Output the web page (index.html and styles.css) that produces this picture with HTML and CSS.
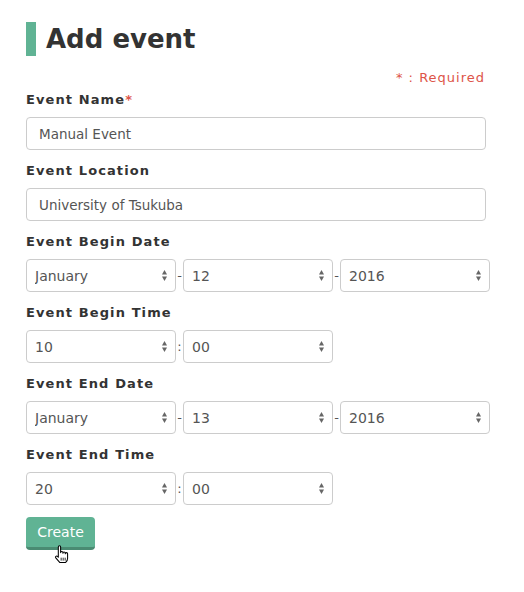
FILE: index.html
```html
<!DOCTYPE html>
<html lang="en">
<head>
<meta charset="utf-8">
<title>Add event</title>
<link rel="stylesheet" href="styles.css">
</head>
<body>
<div class="page">
  <h1 class="title">Add event</h1>
  <p class="required-note">* : Required</p>
  <form class="form">
    <div class="field">
      <label class="label">Event Name<span class="req">*</span></label>
      <input class="text-input" type="text" value="Manual Event">
    </div>
    <div class="field">
      <label class="label">Event Location</label>
      <input class="text-input" type="text" value="University of Tsukuba">
    </div>
    <div class="field">
      <label class="label">Event Begin Date</label>
      <div class="select-row">
        <span class="select-wrap"><select class="select"><option>January</option></select><svg class="arrows" viewBox="0 0 5 11"><polygon points="2.5,0 5,4.5 0,4.5"/><polygon points="0,6.5 5,6.5 2.5,11"/></svg></span>
        <span class="sep">-</span>
        <span class="select-wrap"><select class="select"><option>12</option></select><svg class="arrows" viewBox="0 0 5 11"><polygon points="2.5,0 5,4.5 0,4.5"/><polygon points="0,6.5 5,6.5 2.5,11"/></svg></span>
        <span class="sep">-</span>
        <span class="select-wrap"><select class="select"><option>2016</option></select><svg class="arrows" viewBox="0 0 5 11"><polygon points="2.5,0 5,4.5 0,4.5"/><polygon points="0,6.5 5,6.5 2.5,11"/></svg></span>
      </div>
    </div>
    <div class="field">
      <label class="label">Event Begin Time</label>
      <div class="select-row">
        <span class="select-wrap"><select class="select"><option>10</option></select><svg class="arrows" viewBox="0 0 5 11"><polygon points="2.5,0 5,4.5 0,4.5"/><polygon points="0,6.5 5,6.5 2.5,11"/></svg></span>
        <span class="sep">:</span>
        <span class="select-wrap"><select class="select"><option>00</option></select><svg class="arrows" viewBox="0 0 5 11"><polygon points="2.5,0 5,4.5 0,4.5"/><polygon points="0,6.5 5,6.5 2.5,11"/></svg></span>
      </div>
    </div>
    <div class="field">
      <label class="label">Event End Date</label>
      <div class="select-row">
        <span class="select-wrap"><select class="select"><option>January</option></select><svg class="arrows" viewBox="0 0 5 11"><polygon points="2.5,0 5,4.5 0,4.5"/><polygon points="0,6.5 5,6.5 2.5,11"/></svg></span>
        <span class="sep">-</span>
        <span class="select-wrap"><select class="select"><option>13</option></select><svg class="arrows" viewBox="0 0 5 11"><polygon points="2.5,0 5,4.5 0,4.5"/><polygon points="0,6.5 5,6.5 2.5,11"/></svg></span>
        <span class="sep">-</span>
        <span class="select-wrap"><select class="select"><option>2016</option></select><svg class="arrows" viewBox="0 0 5 11"><polygon points="2.5,0 5,4.5 0,4.5"/><polygon points="0,6.5 5,6.5 2.5,11"/></svg></span>
      </div>
    </div>
    <div class="field">
      <label class="label">Event End Time</label>
      <div class="select-row">
        <span class="select-wrap"><select class="select"><option>20</option></select><svg class="arrows" viewBox="0 0 5 11"><polygon points="2.5,0 5,4.5 0,4.5"/><polygon points="0,6.5 5,6.5 2.5,11"/></svg></span>
        <span class="sep">:</span>
        <span class="select-wrap"><select class="select"><option>00</option></select><svg class="arrows" viewBox="0 0 5 11"><polygon points="2.5,0 5,4.5 0,4.5"/><polygon points="0,6.5 5,6.5 2.5,11"/></svg></span>
      </div>
    </div>
    <button class="btn" type="button">Create</button>
  </form>
</div>
<svg class="cursor" viewBox="0 0 15 18" width="16" height="19">
  <path d="M4 1.8a1.1 1.1 0 0 1 2.2 0V7.2a1.1 1.1 0 0 1 2.2 0v0.6a1.1 1.1 0 0 1 2.2 0v0.5a1.1 1.1 0 0 1 2.2 0V12.5c0 2-1 3.3-1.8 4H5.3L1.6 12.2a1.1 1.1 0 0 1 1.6-1.5L4 11.6Z" fill="#fff" stroke="#000" stroke-width="1" stroke-linejoin="round"/>
  <path d="M6.7 12v2.8M8.6 12v2.8M10.5 12v2.8" stroke="#000" stroke-width="0.8"/>
</svg>
</body>
</html>
```
FILE: styles.css
```css
body {
  margin: 0;
  font-family: "DejaVu Sans", Verdana, sans-serif;
  color: #333;
  background: #fff;
}

.page {
  width: 460px;
  padding: 22px 0 40px 26px;
}

.title {
  margin: 0;
  font-size: 26px;
  font-weight: bold;
  line-height: 34px;
  border-left: 10px solid #60b394;
  padding-left: 10px;
  color: #333;
}

.required-note {
  margin: 13px 0 4px;
  padding-right: 1px;
  text-align: right;
  font-size: 13px;
  line-height: 18px;
  letter-spacing: 1px;
  color: #dd5448;
}

.form {
  margin: 0;
}

.field {
  margin-bottom: 12px;
}

.label {
  display: block;
  font-size: 13px;
  font-weight: bold;
  line-height: 18px;
  letter-spacing: 1.1px;
  margin-bottom: 8px;
  color: #333;
}

.req {
  color: #dd5448;
}

.text-input {
  display: block;
  box-sizing: border-box;
  width: 460px;
  height: 33px;
  margin: 0;
  border: 1px solid #ccc;
  border-radius: 4px;
  padding: 0 12px;
  font-family: "DejaVu Sans", Verdana, sans-serif;
  font-size: 13.5px;
  color: #555;
  background: #fff;
}

.select-row {
  display: flex;
  align-items: center;
}

.select-wrap {
  position: relative;
  display: block;
  flex: 0 0 150px;
  width: 150px;
  height: 33px;
}

.select {
  -webkit-appearance: none;
  appearance: none;
  box-sizing: border-box;
  width: 100%;
  height: 33px;
  margin: 0;
  border: 1px solid #ccc;
  border-radius: 4px;
  background: #fff;
  padding: 0 20px 0 8px;
  font-family: "DejaVu Sans", Verdana, sans-serif;
  font-size: 14px;
  color: #555;
}

.arrows {
  position: absolute;
  right: 9px;
  top: 11px;
  width: 5px;
  height: 11px;
  fill: #666;
  pointer-events: none;
}

.sep {
  flex: 0 0 7px;
  width: 7px;
  text-align: center;
  font-size: 13px;
  color: #555;
}

.btn {
  display: block;
  box-sizing: border-box;
  width: 69px;
  height: 33px;
  margin-top: 4px;
  padding: 0;
  border: none;
  border-bottom: 3px solid #4a8b72;
  border-radius: 4px;
  background: #60b394;
  color: #fff;
  font-family: "DejaVu Sans", Verdana, sans-serif;
  font-size: 14px;
}

.cursor {
  position: absolute;
  left: 54px;
  top: 545px;
}
```
